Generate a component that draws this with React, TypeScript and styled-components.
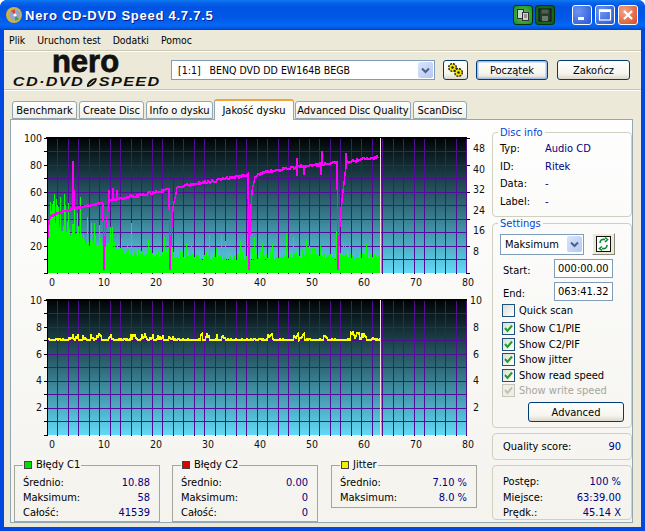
import React, {FC, ReactNode} from 'react';
import styled, {createGlobalStyle} from 'styled-components';

const UI_FONT = `"DejaVu Sans Condensed", "Liberation Sans", sans-serif`;
const PLOT_X = 33;
const PLOT_Y = 6;
const PLOT_W = 420;
const PLOT_H = 135;

const GlobalStyle = createGlobalStyle`
  html, body { margin: 0; padding: 0; background: #fff; }
  body { font-family: ${UI_FONT}; font-size: 11px; color: #000; }
`;

const Win = styled.div`
  width: 645px;
  height: 531px;
  display: flex;
  flex-direction: column;
  overflow: hidden;
  border-radius: 7px 7px 0 0;
  background: #0048e0;
`;

const TitleBar = styled.div`
  height: 30px;
  flex: none;
  display: flex;
  align-items: center;
  padding: 0 7px 0 6px;
  background: linear-gradient(180deg, #0a7cf0 0, #0a60ea 3px, #0054e3 7px, #0058e8 18px, #0468f5 25px, #0058e6 28px, #0040c8 30px);
`;

const TitleText = styled.div`
  flex: 1;
  margin-left: 3px;
  color: #fff;
  font: bold 13px "Liberation Sans", sans-serif;
  letter-spacing: 0.75px;
  text-shadow: 1px 1px #0f1a89;
`;

const CapButton = styled.div<{$kind: 'green' | 'dark' | 'blue' | 'red'; $gap?: number}>`
  width: 20px;
  height: 20px;
  margin-left: ${({$gap}) => $gap ?? 3}px;
  border: 1px solid ${({$kind}) => ($kind === 'green' || $kind === 'dark' ? '#04330a' : '#fff')};
  border-radius: 3px;
  box-sizing: border-box;
  display: flex;
  align-items: center;
  justify-content: center;
  background: ${({$kind}) =>
    $kind === 'green' ? 'radial-gradient(circle at 50% 50%, #6fc46a, #0f8f1c)'
      : $kind === 'dark' ? 'radial-gradient(circle at 50% 50%, #2f7a35, #0a5a16)'
      : $kind === 'blue' ? 'radial-gradient(circle at 30% 30%, #6f95ee, #2456d8)'
      : 'radial-gradient(circle at 30% 30%, #f0a58a, #d8471f)'};
`;

const Body = styled.div`
  flex: 1;
  min-height: 0;
  margin: 0 4px 4px;
  display: flex;
  flex-direction: column;
  background: #ece9d8;
`;

const MenuBar = styled.div`
  height: 20px;
  flex: none;
  display: flex;
  align-items: center;
  padding-left: 5px;
  gap: 12px;
  font-size: 10.4px;
  border-bottom: 1px solid #c8c5b2;
  box-shadow: 0 1px #fff;
`;

const Toolbar = styled.div`
  height: 38px;
  flex: none;
  display: flex;
  align-items: center;
  padding-left: 10px;
  border-bottom: 1px solid #c8c5b2;
  box-shadow: 0 1px #fff;
`;

const Logo = styled.div`
  width: 146px;
  display: flex;
  flex-direction: column;
  align-items: center;
  color: #111;
  font-family: "Liberation Sans", sans-serif;
  font-weight: bold;
  user-select: none;
`;

const LogoNero = styled.div`
  font-size: 31px;
  line-height: 20px;
  height: 20px;
  margin: -1px 0 0 -3px;
  -webkit-text-stroke: 0.8px #111;
`;

const LogoLine = styled.div`
  display: flex;
  align-items: center;
  gap: 1px;
  margin-top: 5px;
  font-size: 12px;
  font-style: italic;
  line-height: 11px;
  letter-spacing: 1px;
  white-space: nowrap;
  transform: scaleX(1.35);
`;

const DriveSelect = styled.div`
  margin-left: 11px;
  width: 264px;
  height: 20px;
  box-sizing: border-box;
  border: 1px solid #7f9db9;
  background: #fff;
  display: flex;
  align-items: center;
  padding-left: 6px;
  white-space: pre;
  font-size: 10.5px;
`;

const DropButton = styled.div`
  margin-left: auto;
  margin-right: 1px;
  width: 15px;
  height: 16px;
  border-radius: 2px;
  background: linear-gradient(135deg, #dbe5fb, #b3c8f5);
  display: flex;
  align-items: center;
  justify-content: center;
  flex: none;
`;

const XpButton = styled.div<{$w: number; $ml?: number; $def?: boolean}>`
  width: ${({$w}) => $w}px;
  height: 20px;
  margin-left: ${({$ml}) => $ml ?? 0}px;
  box-sizing: border-box;
  border: 1px solid #003c74;
  border-radius: 3px;
  background: linear-gradient(180deg, #fff 0, #f5f4ee 70%, #dcd8ca 100%);
  box-shadow: ${({$def}) => ($def ? 'inset 0 0 0 1.5px #a6c0ea' : 'none')};
  display: flex;
  align-items: center;
  justify-content: center;
  font-size: 11px;
`;

const TabRow = styled.div`
  flex: none;
  height: 20px;
  margin-top: 9px;
  padding-left: 8px;
  display: flex;
  align-items: flex-end;
  gap: 2px;
  position: relative;
  z-index: 1;
`;

const Tab = styled.div<{$w: number; $active?: boolean}>`
  width: ${({$w}) => $w}px;
  height: ${({$active}) => ($active ? 21 : 18)}px;
  box-sizing: border-box;
  margin: ${({$active}) => ($active ? '0 -1px -1px -1px' : '0')};
  border: 1px solid #91a7b4;
  border-bottom: ${({$active}) => ($active ? 'none' : '1px solid #91a7b4')};
  border-top: ${({$active}) => ($active ? '2px solid #f2a43a' : '1px solid #91a7b4')};
  border-radius: 3px 3px 0 0;
  background: ${({$active}) => ($active ? '#fcfcfa' : 'linear-gradient(180deg, #fff, #f0efe6)')};
  display: flex;
  align-items: center;
  justify-content: center;
  white-space: nowrap;
  font-size: 11px;
`;

const Panel = styled.div`
  width: 623px;
  height: 404px;
  margin-left: 6px;
  box-sizing: border-box;
  border: 1px solid #91a7b4;
  background: linear-gradient(180deg, #fefefe, #f4f3ee);
  display: flex;
  padding: 5px 0 0 3px;
`;

const LeftColumn = styled.div`
  width: 477px;
  flex: none;
  padding-top: 7px;
  display: flex;
  flex-direction: column;
`;

const ChartSvg = styled.svg`
  display: block;
  width: 476px;
  height: 158px;
  & + & { margin-top: 4px; }
  text { font-family: ${UI_FONT}; font-size: 10.5px; fill: #111; }
`;

const StatsRow = styled.div`
  display: flex;
  gap: 12px;
  margin-top: 6px;
  align-items: flex-start;
`;

const Group = styled.fieldset`
  margin: 0;
  min-width: 0;
  box-sizing: border-box;
  border: 1px solid #d0d0bf;
  border-radius: 4px;
  padding: 0 10px 0 7px;
`;

const GroupTitle = styled.legend`
  padding: 0 2px;
  margin-left: -2px;
  line-height: 14px;
  color: #0046d5;
  font-size: 11px;
  position: relative;
  top: 1px;
`;

const StatBox = styled.fieldset<{$h: number; $ml?: number}>`
  margin: 0 0 0 ${({$ml}) => $ml ?? 0}px;
  min-width: 0;
  width: 146px;
  height: ${({$h}) => $h}px;
  box-sizing: border-box;
  border: 1px solid #a5a59a;
  padding: 3px 9px 0 8px;
`;

const StatTitle = styled.legend`
  display: flex;
  align-items: center;
  gap: 4px;
  margin-left: 0;
  padding: 0 1px 0 1px;
  line-height: 14px;
  font-size: 11px;
`;

const Swatch = styled.span<{$color: string}>`
  width: 6px;
  height: 6px;
  border: 1px solid #444;
  background: ${({$color}) => $color};
`;

const StatRow = styled.div`
  display: flex;
  justify-content: space-between;
  height: 15px;
  line-height: 15px;
  white-space: nowrap;
`;

const Value = styled.span`
  color: #000080;
`;

const Sidebar = styled.div`
  width: 140px;
  margin-left: 1px;
  display: flex;
  flex-direction: column;
`;

const DiscGroup = styled(Group)`
  height: 92px;
  padding-top: 1px;
`;

const InfoRow = styled.div`
  display: flex;
  height: 17.6px;
  line-height: 17.6px;
  span:first-child { width: 45px; }
`;

const SettingsGroup = styled(Group)`
  height: 212px;
  margin-top: -1px;
`;

const SettingsTop = styled.div`
  display: flex;
  align-items: center;
  margin-top: 3px;
  gap: 8px;
`;

const SpeedSelect = styled.div`
  width: 84px;
  height: 21px;
  box-sizing: border-box;
  border: 1px solid #7f9db9;
  background: #fff;
  display: flex;
  align-items: center;
  padding-left: 4px;
`;

const RefreshButton = styled.div`
  width: 23px;
  height: 22px;
  box-sizing: border-box;
  border: 1px solid;
  border-color: #fff #8a8878 #8a8878 #fff;
  background: #ece9d8;
  display: flex;
  align-items: center;
  justify-content: center;
`;

const FieldRow = styled.div<{$mt: number}>`
  display: flex;
  align-items: center;
  margin-top: ${({$mt}) => $mt}px;
  padding-left: 3px;
  label { width: 51px; padding-top: 3px; }
`;

const TimeInput = styled.div`
  width: 59px;
  height: 19px;
  box-sizing: border-box;
  border: 1px solid #7f9db9;
  background: #fff;
  padding-left: 3px;
  line-height: 17px;
`;

const Checks = styled.div`
  margin-top: 2px;
  padding-left: 2px;
`;

const CheckRow = styled.div<{$off?: boolean; $mb?: number}>`
  height: 15.5px;
  margin-bottom: ${({$mb}) => $mb ?? 0}px;
  display: flex;
  align-items: center;
  gap: 4px;
  color: ${({$off}) => ($off ? '#a7a69c' : '#000')};
`;

const CheckBox = styled.span<{$off?: boolean}>`
  width: 13px;
  height: 13px;
  box-sizing: border-box;
  border: 1px solid ${({$off}) => ($off ? '#c6c5b8' : '#1c5180')};
  background: ${({$off}) => ($off ? '#efeee6' : 'linear-gradient(135deg, #dcdcd7, #fff)')};
  display: flex;
  align-items: center;
  justify-content: center;
`;

const AdvancedWrap = styled.div`
  display: flex;
  justify-content: flex-end;
  margin: 3.5px -3px 0 0;
`;

const PlainGroup = styled.div<{$h: number; $mt: number; $pt: number}>`
  height: ${({$h}) => $h}px;
  margin-top: ${({$mt}) => $mt}px;
  box-sizing: border-box;
  border: 1px solid #d0d0bf;
  border-radius: 4px;
  padding: ${({$pt}) => $pt}px 10px 0;
`;

const ProgressRow = styled(StatRow)`
  height: 15.5px;
`;

const rng = (seed: number) => {
  let s = seed;
  return () => {
    s = (s * 16807) % 2147483647;
    return s / 2147483647;
  };
};

const lerp = (pts: number[][], x: number) => {
  for (let i = 1; i < pts.length; i++) {
    if (x <= pts[i][0]) {
      const [x0, y0] = pts[i - 1];
      const [x1, y1] = pts[i];
      return x1 === x0 ? y1 : y0 + ((y1 - y0) * (x - x0)) / (x1 - x0);
    }
  }
  return pts[pts.length - 1][1];
};

// screen coordinates read off the reference
const speedKnots = [
  [48, 238], [49, 222], [51, 216], [60, 212], [73, 209], [103, 203], [104, 270], [105, 240], [106, 225], [109, 200],
  [117, 199], [169, 190], [170, 270], [171, 240], [173, 208], [177, 188], [183, 186], [248, 175],
  [249, 270], [250, 225], [252, 192], [255, 177], [258, 174], [283, 169], [337, 162], [338, 270], [339, 240], [341, 208],
  [345, 173], [347, 162], [378, 157],
];
const speedSpikes = [[73, 161], [74, 190], [109, 190], [113, 188], [117, 190], [297, 158], [297, 176], [322, 151], [321, 175], [304, 175], [346, 153]];

const greenEnv = [
  [48, 50], [55, 58], [62, 52], [72, 50], [85, 42], [103, 34], [110, 32], [130, 24], [170, 22], [200, 19], [250, 18],
  [300, 21], [335, 19], [345, 20], [381, 20],
];
const greenSpikes = [[49, 56], [51, 62], [53, 72], [58, 66], [60, 76], [65, 68], [68, 70], [74, 66], [80, 76], [87, 56], [91, 50], [99, 48], [110, 46], [131, 50], [148, 34], [164, 36], [209, 38], [221, 38], [225, 32], [240, 32], [254, 36], [286, 39], [293, 36], [306, 34], [320, 28], [336, 42], [337, 52]];

const buildSpeed = () => {
  const r = rng(77);
  let d = '';
  for (let x = 48; x <= 378; x++) {
    const noise = x > 120 ? (r() - 0.5) * 2.6 : (r() - 0.5) * 1.6;
    const y = lerp(speedKnots, x);
    d += `${d ? 'L' : 'M'}${x - 47 + PLOT_X} ${Math.round((y > 225 ? y : y + noise) - 138 + PLOT_Y)} `;
  }
  speedSpikes.forEach(([x, y]) => {
    const base = lerp(speedKnots, x);
    d += `M${x - 47 + PLOT_X} ${base - 138 + PLOT_Y}V${y - 138 + PLOT_Y} `;
  });
  return d;
};

const buildGreen = () => {
  const r = rng(4242);
  let d = '';
  const bottom = PLOT_Y + PLOT_H;
  for (let x = 48; x <= 381; x++) {
    const env = lerp(greenEnv, x);
    const roll = r();
    let h = env * (0.68 + 0.34 * r());
    if (roll > 0.9) h = env * (1.1 + 0.45 * r());
    const spike = greenSpikes.find(s => s[0] === x);
    if (spike) h = spike[1];
    d += `M${x - 47 + PLOT_X + 0.5} ${bottom}V${Math.round(bottom - h)} `;
  }
  return d;
};

const buildJitter = () => {
  const r = rng(909);
  let d = '';
  let left = 0;
  for (let x = 48; x <= 380; x++) {
    if (left === 0 && r() > 0.88) left = 1 + Math.floor(r() * 5);
    let y = 340;
    if (left > 0) {
      y = 339 - r() * (x > 320 ? 7 : 5.5);
      left--;
    } else if (r() > 0.7) {
      y = 339;
    }
    d += `${d ? 'L' : 'M'}${x - 47 + PLOT_X} ${Math.round(y - 300 + PLOT_Y)} `;
  }
  return d;
};

const XLabels = () => (
  <>
    {[0, 10, 20, 30, 40, 50, 60, 70, 80].map((v, i) => (
      <text key={v} x={38 + 52 * i} y={154} textAnchor="middle">{v}</text>
    ))}
  </>
);

const Ticks: FC<{sides: boolean}> = ({sides}) => {
  let d = '';
  for (let i = 0; i <= 10; i++) {
    const y = PLOT_Y + i * 13.45 + 0.5;
    d += `M${PLOT_X - 3} ${y}H${PLOT_X} `;
    if (sides && i % 2 === 0) d += `M${PLOT_X + PLOT_W} ${y}H${PLOT_X + PLOT_W + 3} `;
  }
  return <path d={d} stroke="#000" strokeWidth={1} shapeRendering="crispEdges" fill="none"/>;
};

const Plot: FC<{id: string; children: ReactNode}> = ({id, children}) => {
  let grid = '';
  for (let i = 0; i <= 40; i++) {
    const x = Math.round(PLOT_X + i * 10.48) + 0.5;
    grid += `M${x} ${PLOT_Y}V${PLOT_Y + PLOT_H} `;
  }
  for (let i = 1; i < 10; i++) {
    const y = Math.round(PLOT_Y + i * 13.45) + 0.5;
    grid += `M${PLOT_X} ${y}H${PLOT_X + PLOT_W} `;
  }
  return (
    <>
      <defs>
        <linearGradient id={id} x1="0" y1="0" x2="0" y2="1">
          <stop offset="0" stopColor="#000405"/>
          <stop offset="0.5" stopColor="#2f6878"/>
          <stop offset="1" stopColor="#62daf7"/>
        </linearGradient>
      </defs>
      <rect x={PLOT_X} y={PLOT_Y} width={PLOT_W} height={PLOT_H} fill={`url(#${id})`}/>
      <path d={grid} stroke="#520c98" strokeWidth={1} shapeRendering="crispEdges" fill="none"/>
      {children}
      <path d={`M${PLOT_X - 1} ${PLOT_Y - 1}H${PLOT_X + PLOT_W}M${PLOT_X - 1} ${PLOT_Y}H${PLOT_X + PLOT_W}`} stroke="#000" shapeRendering="crispEdges"/>
      <path d={`M${PLOT_X + 0.5} ${PLOT_Y}V${PLOT_Y + PLOT_H}`} stroke="#000" shapeRendering="crispEdges"/>
      <path d={`M${PLOT_X} ${PLOT_Y + PLOT_H + 0.5}H${PLOT_X + PLOT_W}`} stroke="#000" strokeDasharray="1 9.48" shapeRendering="crispEdges"/>
      <rect x={366} y={PLOT_Y} width={1} height={PLOT_H} fill="#f3e7d8"/>
    </>
  );
};

const TopChart = () => (
  <ChartSvg viewBox="0 0 476 158">
    <Plot id="gradTop">
      <path d={buildGreen()} stroke="#00ff00" strokeWidth={1} fill="none" shapeRendering="crispEdges"/>
      <path d={buildSpeed()} stroke="#ff00ff" strokeWidth={1.5} fill="none" shapeRendering="crispEdges"/>
    </Plot>
    <Ticks sides/>
    {[100, 80, 60, 40, 20].map((v, i) => (
      <text key={v} x={28} y={10 + i * 27} textAnchor="end">{v}</text>
    ))}
    {[48, 40, 32, 24, 16, 8].map((v, i) => (
      <text key={v} x={459} y={20 + i * 20.6}>{v}</text>
    ))}
    <XLabels/>
  </ChartSvg>
);

const BottomChart = () => (
  <ChartSvg viewBox="0 0 476 158">
    <Plot id="gradBottom">
      <path d={buildJitter()} stroke="#ffff00" strokeWidth={1.5} fill="none" shapeRendering="crispEdges"/>
    </Plot>
    <Ticks sides={false}/>
    {[10, 8, 6, 4, 2].map((v, i) => (
      <text key={v} x={28} y={10 + i * 26.8} textAnchor="end">{v}</text>
    ))}
    {[10, 8, 6, 4, 2].map((v, i) => (
      <text key={v} x={i === 0 ? 456 : 459} y={10 + i * 26.8}>{v}</text>
    ))}
    <XLabels/>
  </ChartSvg>
);

const Chevron = () => (
  <svg width="9" height="7" viewBox="0 0 9 7">
    <path d="M1 1.5 L4.5 5 L8 1.5" stroke="#4d6185" strokeWidth="2" fill="none"/>
  </svg>
);

const Check: FC<{off?: boolean; label: string; mb?: number}> = ({off, label, mb}) => (
  <CheckRow $off={off} $mb={mb}>
    <CheckBox $off={off}>
      <svg width="9" height="9" viewBox="0 0 9 9">
        <path d="M1 4 L3.5 7 L8 1.5" stroke={off ? '#c4c3b6' : '#21a121'} strokeWidth="2" fill="none"/>
      </svg>
    </CheckBox>
    {label}
  </CheckRow>
);

const UncheckedRow: FC<{label: string; mb?: number}> = ({label, mb}) => (
  <CheckRow $mb={mb}>
    <CheckBox/>
    {label}
  </CheckRow>
);

const Stat: FC<{title: string; color: string; h: number; ml?: number; rows: string[][]}> = ({title, color, h, ml, rows}) => (
  <StatBox $h={h} $ml={ml}>
    <StatTitle><Swatch $color={color}/>{title}</StatTitle>
    {rows.map(([k, v]) => (
      <StatRow key={k}><span>{k}</span><Value>{v}</Value></StatRow>
    ))}
  </StatBox>
);

const Gear: FC<{cx: number; cy: number}> = ({cx, cy}) => (
  <>
    <circle cx={cx} cy={cy} r={3.8} fill="#f0e000" stroke="#1a1a1a" strokeWidth={1.3} strokeDasharray="2 1"/>
    <circle cx={cx} cy={cy} r={1.2} fill="#1a1a1a"/>
  </>
);

const tabs: [string, number, boolean?][] = [
  ['Benchmark', 65],
  ['Create Disc', 65],
  ['Info o dysku', 67],
  ['Jakość dysku', 80, true],
  ['Advanced Disc Quality', 116],
  ['ScanDisc', 54],
];

export default function App() {
  return (
    <>
      <GlobalStyle/>
      <Win>
        <TitleBar>
          <svg width="16" height="16" viewBox="0 0 16 16">
            <circle cx="8" cy="8" r="8" fill="#d4b040"/>
            <circle cx="9" cy="8" r="5.5" fill="#8fa6cf"/>
            <path d="M9 8 L5 4 A5.5 5.5 0 0 1 9 2.5 Z" fill="#d8443a"/>
            <path d="M9 8 L13 12 A5.5 5.5 0 0 1 9 13.5 Z" fill="#48a048"/>
            <circle cx="9" cy="8" r="1.6" fill="#fff"/>
          </svg>
          <TitleText>Nero CD-DVD Speed 4.7.7.5</TitleText>
          <CapButton $kind="green">
            <svg width="14" height="14" viewBox="0 0 14 14">
              <rect x="1.5" y="1.5" width="6" height="9" fill="#cfd6cf" stroke="#333" strokeWidth="1"/>
              <rect x="6.5" y="4.5" width="6" height="8" fill="#cfd6cf" stroke="#333" strokeWidth="1"/>
              <path d="M8 7H11M8 9H11" stroke="#555" strokeWidth="1"/>
            </svg>
          </CapButton>
          <CapButton $kind="dark" $gap={2}>
            <svg width="14" height="14" viewBox="0 0 14 14">
              <rect x="1" y="1" width="12" height="12" fill="#263a2b" stroke="#111" strokeWidth="1"/>
              <rect x="3.5" y="1.5" width="7" height="4" fill="#4d5f52"/>
              <rect x="4" y="8" width="6" height="5" fill="#68786b"/>
            </svg>
          </CapButton>
          <CapButton $kind="blue" $gap={17}>
            <svg width="12" height="12" viewBox="0 0 12 12"><rect x="2" y="8" width="6" height="3" fill="#fff"/></svg>
          </CapButton>
          <CapButton $kind="blue">
            <svg width="14" height="14" viewBox="0 0 14 14"><rect x="1.5" y="2" width="11" height="10" fill="none" stroke="#fff" strokeWidth="1.2"/><rect x="1" y="1.5" width="12" height="2.5" fill="#fff"/></svg>
          </CapButton>
          <CapButton $kind="red">
            <svg width="12" height="12" viewBox="0 0 12 12"><path d="M2 2 L10 10 M10 2 L2 10" stroke="#fff" strokeWidth="2.2"/></svg>
          </CapButton>
        </TitleBar>
        <Body>
          <MenuBar>
            <span>Plik</span>
            <span>Uruchom test</span>
            <span>Dodatki</span>
            <span>Pomoc</span>
          </MenuBar>
          <Toolbar>
            <Logo>
              <LogoNero>nero</LogoNero>
              <LogoLine>
                CD·DVD
                <svg width="9" height="11" viewBox="0 0 9 11">
                  <path d="M1 10 C0 6 4 1 8 1 C9 4 5 10 1 10 Z" fill="#111"/>
                  <path d="M2.5 8 L6.5 3" stroke="#ece9d8" strokeWidth="0.8"/>
                </svg>
                SPEED
              </LogoLine>
            </Logo>
            <DriveSelect>
              {'[1:1]   BENQ DVD DD EW164B BEGB'}
              <DropButton><Chevron/></DropButton>
            </DriveSelect>
            <XpButton $w={25} $ml={8}>
              <svg width="18" height="16" viewBox="0 0 18 16">
                <Gear cx={5.5} cy={5.5}/>
                <Gear cx={11.5} cy={10.5}/>
              </svg>
            </XpButton>
            <XpButton $w={72} $ml={8} $def>Początek</XpButton>
            <XpButton $w={73} $ml={9}>Zakończ</XpButton>
          </Toolbar>
          <TabRow>
            {tabs.map(([name, w, active]) => (
              <Tab key={name} $w={w} $active={active}>{name}</Tab>
            ))}
          </TabRow>
          <Panel>
            <LeftColumn>
              <TopChart/>
              <BottomChart/>
              <StatsRow>
                <Stat title="Błędy C1" color="#00e000" h={64} rows={[['Średnio:', '10.88'], ['Maksimum:', '58'], ['Całość:', '41539']]}/>
                <Stat title="Błędy C2" color="#e00000" h={64} rows={[['Średnio:', '0.00'], ['Maksimum:', '0'], ['Całość:', '0']]}/>
                <Stat title="Jitter" color="#f0f000" h={50} ml={1} rows={[['Średnio:', '7.10 %'], ['Maksimum:', '8.0 %']]}/>
              </StatsRow>
            </LeftColumn>
            <Sidebar>
              <DiscGroup>
                <GroupTitle>Disc info</GroupTitle>
                <InfoRow><span>Typ:</span><Value>Audio CD</Value></InfoRow>
                <InfoRow><span>ID:</span><Value>Ritek</Value></InfoRow>
                <InfoRow><span>Data:</span><Value>-</Value></InfoRow>
                <InfoRow><span>Label:</span><Value>-</Value></InfoRow>
              </DiscGroup>
              <SettingsGroup>
                <GroupTitle>Settings</GroupTitle>
                <SettingsTop>
                  <SpeedSelect>
                    Maksimum
                    <DropButton><Chevron/></DropButton>
                  </SpeedSelect>
                  <RefreshButton>
                    <svg width="15" height="16" viewBox="0 0 15 16">
                      <rect x="0.5" y="0.5" width="14" height="15" fill="#fff" stroke="#111"/>
                      <path d="M4 7 C4 4 6 3 9 3.5 M9 1.5 L11.5 3.5 L9 6" stroke="#0a8a2a" strokeWidth="1.6" fill="none"/>
                      <path d="M11 9 C11 12 9 13 6 12.5 M6 10.5 L3.5 12.5 L6 14.5" stroke="#0a8a2a" strokeWidth="1.6" fill="none"/>
                    </svg>
                  </RefreshButton>
                </SettingsTop>
                <FieldRow $mt={4}><label>Start:</label><TimeInput>000:00.00</TimeInput></FieldRow>
                <FieldRow $mt={4}><label>End:</label><TimeInput>063:41.32</TimeInput></FieldRow>
                <Checks>
                  <UncheckedRow label="Quick scan" mb={2.5}/>
                  <Check label="Show C1/PIE"/>
                  <Check label="Show C2/PIF"/>
                  <Check label="Show jitter"/>
                  <Check label="Show read speed"/>
                  <Check label="Show write speed" off/>
                </Checks>
                <AdvancedWrap>
                  <XpButton $w={96}>Advanced</XpButton>
                </AdvancedWrap>
              </SettingsGroup>
              <PlainGroup $h={27} $mt={5} $pt={5}>
                <StatRow><span>Quality score:</span><Value>90</Value></StatRow>
              </PlainGroup>
              <PlainGroup $h={55} $mt={5} $pt={8}>
                <ProgressRow><span>Postęp:</span><Value>100 %</Value></ProgressRow>
                <ProgressRow><span>Miejsce:</span><Value>63:39.00</Value></ProgressRow>
                <ProgressRow><span>Prędk.:</span><Value>45.14 X</Value></ProgressRow>
              </PlainGroup>
            </Sidebar>
          </Panel>
        </Body>
      </Win>
    </>
  );
}
